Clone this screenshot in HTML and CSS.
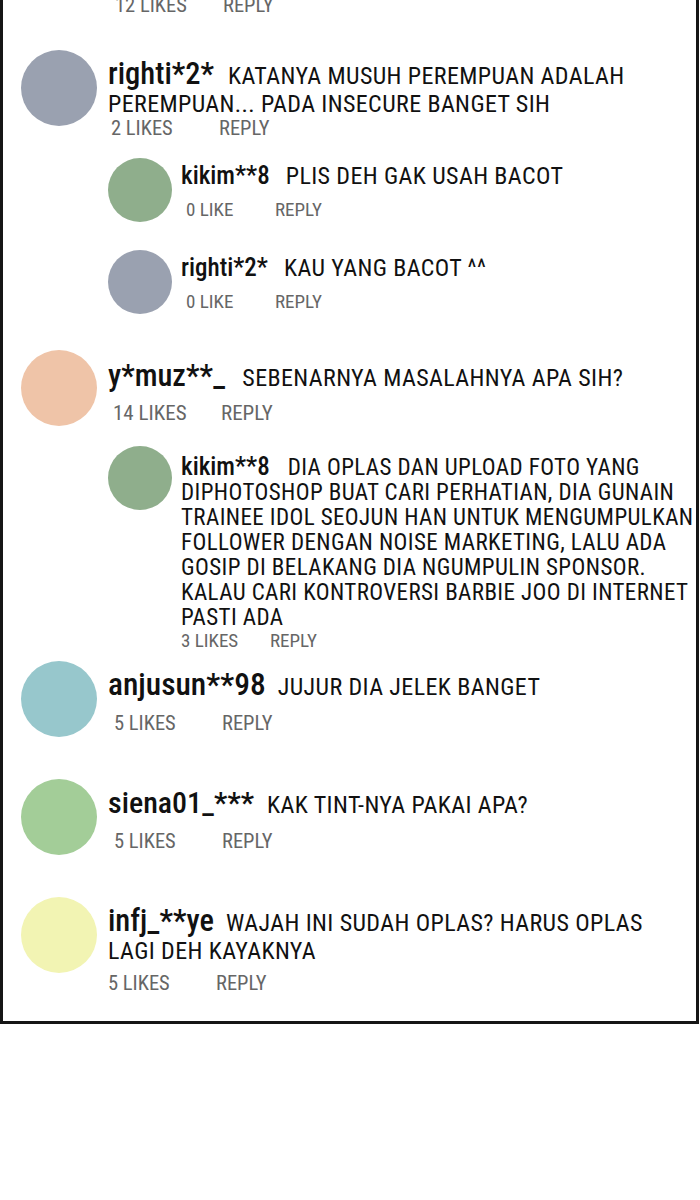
FILE: index.html
```html
<!DOCTYPE html>
<html>
<head>
<meta charset="utf-8">
<link rel="stylesheet" href="styles.css">
</head>
<body>
<div class="panel">
  <div class="meta meta-top"><span class="likes">12 LIKES</span><span>REPLY</span></div>

  <div class="comment c1">
    <div class="avatar gray"></div>
    <div class="body">
      <p class="text"><span class="name">righti*2*</span>KATANYA MUSUH PEREMPUAN ADALAH<br>PEREMPUAN... PADA INSECURE BANGET SIH</p>
      <div class="meta"><span class="likes">2 LIKES</span><span>REPLY</span></div>
    </div>
  </div>

  <div class="comment reply r1">
    <div class="avatar sage"></div>
    <div class="body">
      <p class="text"><span class="name">kikim**8</span>PLIS DEH GAK USAH BACOT</p>
      <div class="meta"><span class="likes">0 LIKE</span><span>REPLY</span></div>
    </div>
  </div>

  <div class="comment reply r2">
    <div class="avatar gray"></div>
    <div class="body">
      <p class="text"><span class="name">righti*2*</span>KAU YANG BACOT ^^</p>
      <div class="meta"><span class="likes">0 LIKE</span><span>REPLY</span></div>
    </div>
  </div>

  <div class="comment c2">
    <div class="avatar peach"></div>
    <div class="body">
      <p class="text"><span class="name">y*muz**_</span>SEBENARNYA MASALAHNYA APA SIH?</p>
      <div class="meta"><span class="likes">14 LIKES</span><span>REPLY</span></div>
    </div>
  </div>

  <div class="comment reply r3">
    <div class="avatar sage"></div>
    <div class="body">
      <p class="text long"><span class="name">kikim**8</span>DIA OPLAS DAN UPLOAD FOTO YANG<br>DIPHOTOSHOP BUAT CARI PERHATIAN, DIA GUNAIN<br>TRAINEE IDOL SEOJUN HAN UNTUK MENGUMPULKAN<br>FOLLOWER DENGAN NOISE MARKETING, LALU ADA<br>GOSIP DI BELAKANG DIA NGUMPULIN SPONSOR.<br>KALAU CARI KONTROVERSI BARBIE JOO DI INTERNET<br>PASTI ADA</p>
      <div class="meta"><span class="likes">3 LIKES</span><span>REPLY</span></div>
    </div>
  </div>

  <div class="comment c3">
    <div class="avatar teal"></div>
    <div class="body">
      <p class="text"><span class="name">anjusun**98</span>JUJUR DIA JELEK BANGET</p>
      <div class="meta"><span class="likes">5 LIKES</span><span>REPLY</span></div>
    </div>
  </div>

  <div class="comment c4">
    <div class="avatar green"></div>
    <div class="body">
      <p class="text"><span class="name">siena01_***</span>KAK TINT-NYA PAKAI APA?</p>
      <div class="meta"><span class="likes">5 LIKES</span><span>REPLY</span></div>
    </div>
  </div>

  <div class="comment c5">
    <div class="avatar yellow"></div>
    <div class="body">
      <p class="text"><span class="name">infj_**ye</span>WAJAH INI SUDAH OPLAS? HARUS OPLAS<br>LAGI DEH KAYAKNYA</p>
      <div class="meta"><span class="likes">5 LIKES</span><span>REPLY</span></div>
    </div>
  </div>
</div>
</body>
</html>
```

FILE: styles.css
```css
html, body {
  margin: 0;
  padding: 0;
  background: #ffffff;
}

body {
  font-family: "Roboto", "Liberation Sans", sans-serif;
  font-stretch: 75%;
  color: #111111;
}

.panel {
  width: 693px;
  margin-top: -5px;
  border: 3px solid #151515;
  border-top: none;
  padding-bottom: 28px;
}

.meta {
  display: flex;
  font-size: 20.5px;
  line-height: 20px;
  color: #666666;
  padding-left: 3px;
}

.meta .likes {
  width: 108px;
}

.meta-top {
  padding-left: 112px;
}

.comment {
  display: flex;
  align-items: flex-start;
  padding-left: 18px;
}

.avatar {
  flex: none;
  width: 76px;
  height: 76px;
  border-radius: 50%;
  margin-right: 11px;
}

.body {
  flex: 1;
  padding-top: 10px;
  padding-right: 2px;
}

.text {
  margin: 0;
  font-size: 24px;
  line-height: 28px;
  letter-spacing: 0.4px;
  white-space: nowrap;
}

.name {
  font-size: 30.5px;
  font-weight: 500;
  letter-spacing: 0;
  margin-right: 14px;
}

.reply {
  padding-left: 105px;
}

.reply .avatar {
  width: 64px;
  height: 64px;
  margin-right: 9px;
}

.reply .body {
  padding-top: 4px;
}

.reply .name {
  font-size: 25px;
  margin-right: 16px;
}

.reply .meta {
  font-size: 19px;
  padding-left: 5px;
  margin-top: 10px;
}

.reply .meta .likes {
  width: 89px;
}

.r3 .body {
  padding-top: 8px;
}

.text.long {
  font-size: 23px;
  line-height: 25px;
}

.r3 .name {
  margin-right: 18px;
}

.r3 .meta {
  font-size: 19px;
  padding-left: 0;
  margin-top: 1px;
}

.gray { background: #9aa1b0; }
.sage { background: #8fae8c; }
.peach { background: #efc4a8; }
.teal { background: #97c7cc; }
.green { background: #a3cd98; }
.yellow { background: #f2f4b3; }

.c1 { margin-top: 35px; }
.r1 { margin-top: 20px; }
.r2 { margin-top: 28px; }
.c2 { margin-top: 36px; }
.c2 .body { padding-top: 12px; }
.c2 .name { margin-right: 17px; }
.c2 .meta { margin-top: 11px; padding-left: 5px; font-size: 21px; }
.r3 { margin-top: 20px; }
.c3 { margin-top: 10px; }
.c3 .name { font-size: 31.5px; margin-right: 12px; }
.c4 .name { font-size: 30px; margin-right: 13px; }
.c3 .meta, .c4 .meta { margin-top: 12px; padding-left: 6px; }
.c4 { margin-top: 42px; }
.c5 { margin-top: 42px; }
.c5 .name { margin-right: 12px; }
.c5 .meta { padding-left: 0; margin-top: 8px; }
```
